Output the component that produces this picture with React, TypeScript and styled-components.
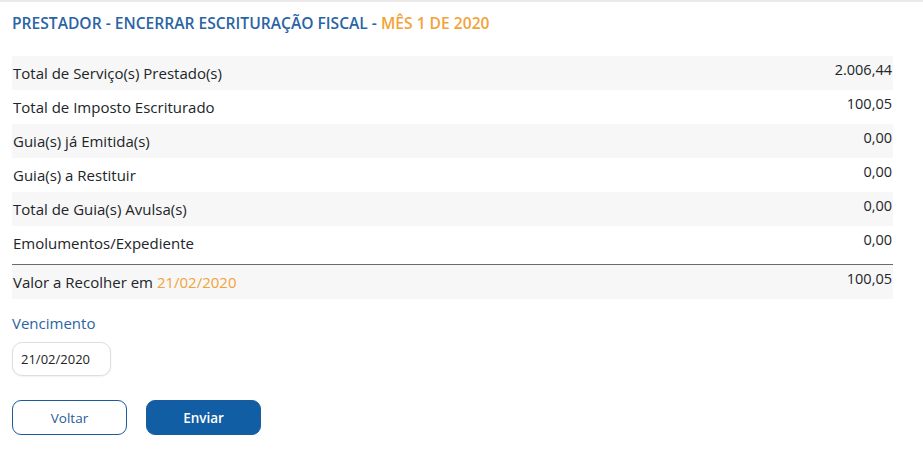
import styled, { createGlobalStyle } from 'styled-components';

const GlobalStyle = createGlobalStyle`
  body {
    margin: 0;
    background: #fff;
    font-family: 'Open Sans', 'Noto Sans', sans-serif;
    color: #212529;
  }
`;

const Page = styled.div`
  border-top: 2px solid #e9e9e9;
  padding: 10px 30px 20px 12px;
`;

const Title = styled.h1`
  margin: 0 0 22px 0;
  font-size: 15.6px;
  font-weight: 600;
  color: #2a64a4;
  letter-spacing: 0;
`;

const Highlight = styled.span`
  color: #f2a33a;
`;

const Table = styled.div`
  display: flex;
  flex-direction: column;
`;

const Row = styled.div<{ $shaded?: boolean; $total?: boolean }>`
  display: flex;
  justify-content: space-between;
  align-items: flex-start;
  height: 34px;
  padding: 0 1px;
  background: ${(p) => (p.$shaded ? '#f7f7f7' : '#fff')};
  border-top: ${(p) => (p.$total ? '1px solid #6b6b6b' : 'none')};
  margin-top: ${(p) => (p.$total ? '4px' : '0')};
  font-size: 15px;
`;

const Label = styled.span`
  padding-top: 7px;
`;

const Value = styled.span`
  padding-top: 4px;
  font-size: 14.5px;
`;

const FieldLabel = styled.div`
  margin-top: 14px;
  font-size: 15px;
  color: #2a64a4;
`;

const DateInput = styled.input`
  display: block;
  margin-top: 9px;
  width: 99px;
  height: 34px;
  box-sizing: border-box;
  border: 1px solid #dedede;
  border-radius: 10px;
  box-shadow: 0 1px 2px rgba(0, 0, 0, 0.06);
  padding: 0 8px;
  font-family: inherit;
  font-size: 13px;
  color: #222;
  outline: none;
`;

const Actions = styled.div`
  display: flex;
  gap: 19px;
  margin-top: 24px;
`;

const Button = styled.button<{ $primary?: boolean }>`
  width: 115px;
  height: 35px;
  border-radius: 9px;
  border: 1px solid #1a5c9e;
  background: ${(p) => (p.$primary ? '#125ea5' : '#fff')};
  color: ${(p) => (p.$primary ? '#fff' : '#2a5c94')};
  font-family: inherit;
  font-size: 13.5px;
  font-weight: ${(p) => (p.$primary ? 600 : 400)};
  cursor: pointer;
`;

const rows = [
  { label: 'Total de Serviço(s) Prestado(s)', value: '2.006,44' },
  { label: 'Total de Imposto Escriturado', value: '100,05' },
  { label: 'Guia(s) já Emitida(s)', value: '0,00' },
  { label: 'Guia(s) a Restituir', value: '0,00' },
  { label: 'Total de Guia(s) Avulsa(s)', value: '0,00' },
  { label: 'Emolumentos/Expediente', value: '0,00' },
];

export default function App() {
  return (
    <>
      <GlobalStyle />
      <Page>
        <Title>
          PRESTADOR - ENCERRAR ESCRITURAÇÃO FISCAL - <Highlight>MÊS 1 DE 2020</Highlight>
        </Title>
        <Table>
          {rows.map((r, i) => (
            <Row key={r.label} $shaded={i % 2 === 0}>
              <Label>{r.label}</Label>
              <Value>{r.value}</Value>
            </Row>
          ))}
          <Row $shaded $total>
            <Label>
              Valor a Recolher em <Highlight>21/02/2020</Highlight>
            </Label>
            <Value>100,05</Value>
          </Row>
        </Table>
        <FieldLabel>Vencimento</FieldLabel>
        <DateInput defaultValue="21/02/2020" />
        <Actions>
          <Button>Voltar</Button>
          <Button $primary>Enviar</Button>
        </Actions>
      </Page>
    </>
  );
}
